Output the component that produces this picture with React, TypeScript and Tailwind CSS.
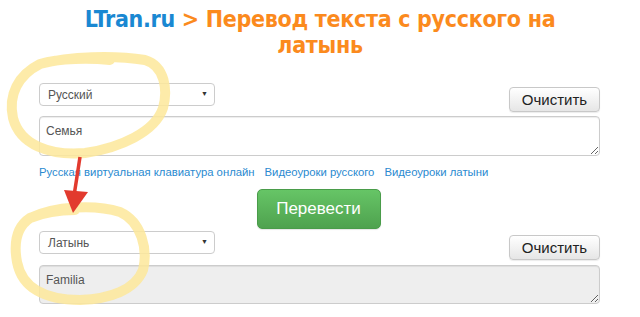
import { ReactNode } from "react";

const arial = { fontFamily: '"Liberation Sans", Arial, sans-serif' };

function FakeSelect({ label }: { label: string }) {
  return (
    <div className="flex h-[23px] w-[176px] items-center justify-between rounded-[4px] border border-[#cccccc] bg-white pl-[8px] pr-[6px] text-[12px] text-[#555555]">
      <span>{label}</span>
      <span className="text-[7px] text-[#333333]">▼</span>
    </div>
  );
}

function ClearButton() {
  return (
    <button className="mt-[4px] h-[25px] w-[91px] rounded-[4px] border border-[#c8c8c8] bg-gradient-to-b from-white to-[#e6e6e6] text-[15px] leading-none text-[#222222] shadow-[0_1px_1px_rgba(0,0,0,0.08)]">
      Очистить
    </button>
  );
}

function Box({ value, grey, h }: { value: string; grey?: boolean; h: string }) {
  return (
    <textarea
      readOnly
      value={value}
      className={
        "block w-full rounded-[4px] border border-[#cccccc] px-[6px] pt-[5px] text-[12px] text-[#555555] shadow-[inset_0_1px_1px_rgba(0,0,0,0.075)] outline-none " +
        h +
        (grey ? " bg-[#eeeeee]" : " bg-white")
      }
    />
  );
}

function LangRow({ children }: { children: ReactNode }) {
  return <div className="flex items-start justify-between">{children}</div>;
}

function Marks() {
  return (
    <svg
      className="pointer-events-none absolute left-0 top-0"
      width="640"
      height="317"
      viewBox="0 0 640 317"
    >
      <g fill="none" stroke="#fde79a" strokeOpacity="0.85" strokeWidth="10" strokeLinecap="round" strokeLinejoin="round">
        <path d="M40 64 C70 56 115 55 145 60 C165 66 168 90 163 108 C155 132 120 148 85 153 C50 156 20 145 13 118 C8 95 18 75 40 64 C60 58 90 58 110 60" />
        <path d="M30 218 C55 206 95 204 120 212 C142 222 148 250 143 270 C135 290 110 299 80 300 C45 300 22 288 17 262 C13 240 18 226 30 218 C45 212 60 210 75 210" />
      </g>
      <line x1="80" y1="157" x2="74" y2="196" stroke="#e23a2e" strokeWidth="3.5" />
      <polygon points="64,190 88,192 73,213" fill="#e23a2e" />
    </svg>
  );
}

export default function App() {
  return (
    <div className="relative h-[317px] w-[640px] overflow-hidden bg-white" style={arial}>
      <h1
        className="pt-[6px] text-center text-[23px] font-bold leading-[26px] tracking-[-0.3px]"
        style={{ fontFamily: '"Liberation Sans Narrow", "DejaVu Sans Condensed", sans-serif' }}
      >
        <span className="text-[#1a88d2]">LTran.ru</span>{" "}
        <span className="text-[#fb8a1d]">
          &gt; Перевод текста с русского на
          <br />
          латынь
        </span>
      </h1>

      <div className="ml-[39px] mt-[25px] w-[561px]">
        <LangRow>
          <FakeSelect label="Русский" />
          <ClearButton />
        </LangRow>
        <div className="mt-[4px]">
          <Box value="Семья" h="h-[40px]" />
        </div>

        <div className="mt-[9px] flex gap-[10px] text-[11.3px] leading-[14px] text-[#2a8ad0]">
          <span>Русская виртуальная клавиатура онлайн</span>
          <span>Видеоуроки русского</span>
          <span>Видеоуроки латыни</span>
        </div>

        <div className="mt-[10px] flex justify-center pr-[2px]">
          <button className="h-[40px] w-[124px] rounded-[5px] border border-[#4a9c4a] bg-gradient-to-b from-[#66c566] to-[#4fa24f] text-[17px] text-white shadow-[0_1px_1px_rgba(0,0,0,0.1)]">
            Перевести
          </button>
        </div>

        <div className="mt-[2px]">
          <LangRow>
            <FakeSelect label="Латынь" />
            <ClearButton />
          </LangRow>
        </div>
        <div className="mt-[5px]">
          <Box value="Familia" grey h="h-[39px]" />
        </div>
      </div>

      <Marks />
    </div>
  );
}
